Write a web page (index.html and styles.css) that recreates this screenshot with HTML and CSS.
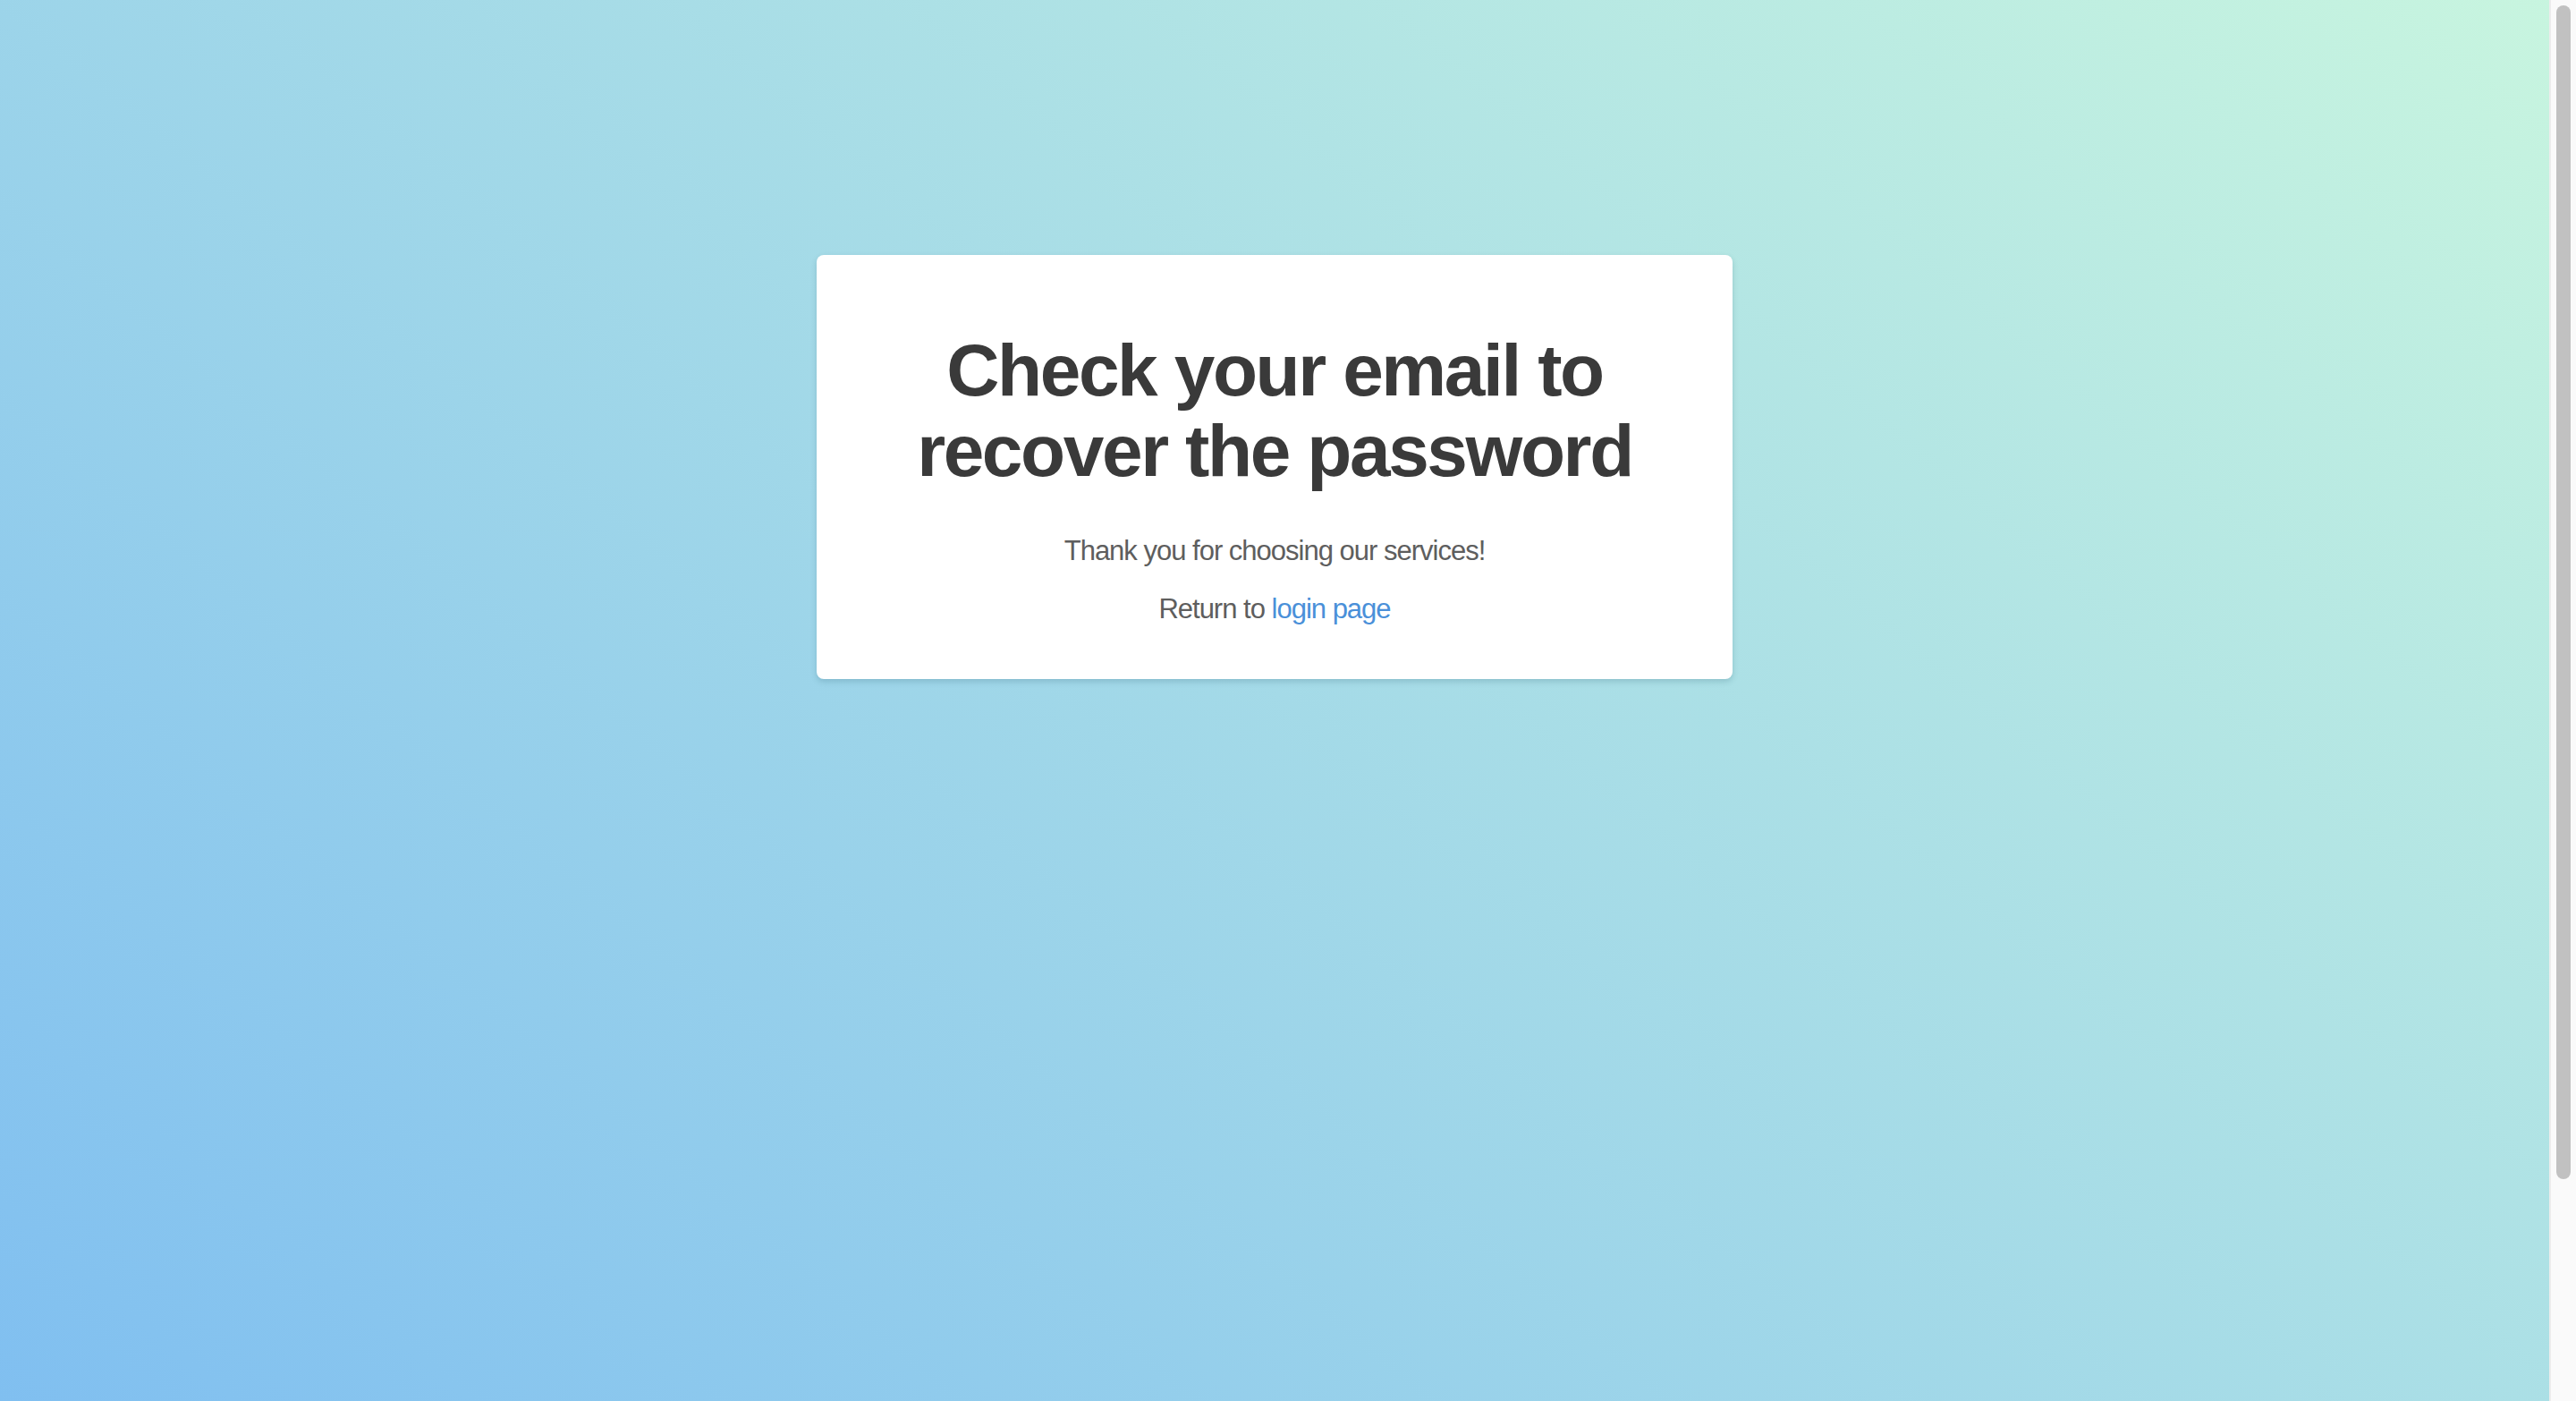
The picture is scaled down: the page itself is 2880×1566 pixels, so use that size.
FILE: index.html
```html
<!DOCTYPE html>
<html lang="en">
<head>
<meta charset="utf-8">
<title>Check your email</title>
<link rel="stylesheet" href="styles.css">
</head>
<body>
<main class="page">
  <section class="card">
    <h1 class="card-title">Check your email to recover the password</h1>
    <p class="card-text card-text-first">Thank you for choosing our services!</p>
    <p class="card-text">Return to <a class="card-link" href="#">login page</a></p>
  </section>
</main>
<div class="scrollbar" aria-hidden="true"><div class="scrollbar-thumb"></div></div>
</body>
</html>
```
FILE: styles.css
```css
html {
  background: linear-gradient(40deg, #80bff0 0%, #c8f5df 100%) fixed;
  min-height: 100%;
}
body {
  margin: 0;
  display: flex;
  min-height: 100vh;
  font-family: "Liberation Sans", Arial, Helvetica, sans-serif;
}
.page {
  flex: 1;
  padding-top: 285px;
  display: flex;
  flex-direction: column;
  align-items: center;
}
.card {
  width: 1024px;
  box-sizing: border-box;
  background: #ffffff;
  border-radius: 8px;
  padding: 84px 40px 54px;
  text-align: center;
  box-shadow: 0 3px 6px rgba(40, 90, 110, 0.22);
}
.card-title {
  margin: 0;
  font-size: 82px;
  line-height: 90px;
  font-weight: 700;
  letter-spacing: -2.4px;
  color: #3a3a3a;
}
.card-text {
  margin: 17px 0 0;
  font-size: 31px;
  line-height: 48px;
  letter-spacing: -1px;
  color: #5e5e5e;
}
.card-text-first {
  margin-top: 43px;
}
.card-link {
  color: #4a90d9;
  text-decoration: none;
}
.scrollbar {
  position: sticky;
  top: 0;
  width: 30px;
  height: 100vh;
  flex-shrink: 0;
  box-sizing: border-box;
  background: #fafafa;
  border-left: 2px solid #ececec;
  padding: 6px 6px 0 6px;
}
.scrollbar-thumb {
  height: 1312px;
  background: #c1c1c1;
  border-radius: 8px;
}
```
